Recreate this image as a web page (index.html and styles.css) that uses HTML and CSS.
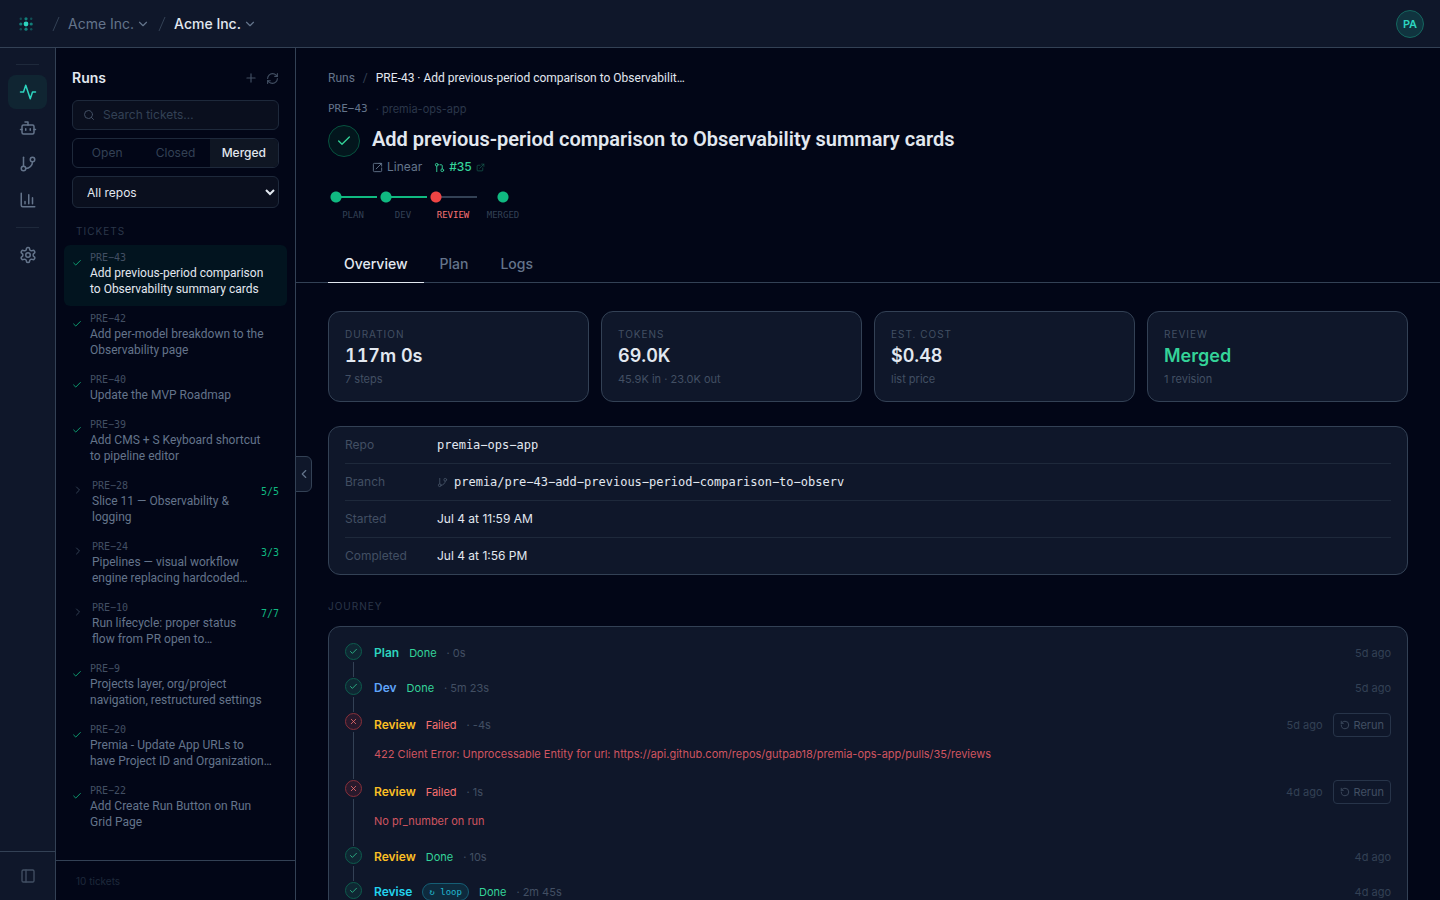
FILE: index.html
```html
<!DOCTYPE html>
<html lang="en">
<head>
<meta charset="utf-8">
<title>Runs</title>
<link rel="stylesheet" href="styles.css">
</head>
<body>
<svg width="0" height="0" class="defs" aria-hidden="true">
  <symbol id="check" viewBox="0 0 24 24"><path d="M20 6 9 17l-5-5"/></symbol>
  <symbol id="x" viewBox="0 0 24 24"><path d="M18 6 6 18M6 6l12 12"/></symbol>
  <symbol id="right" viewBox="0 0 24 24"><path d="m9 18 6-6-6-6"/></symbol>
  <symbol id="down" viewBox="0 0 24 24"><path d="m6 9 6 6 6-6"/></symbol>
  <symbol id="branch" viewBox="0 0 24 24"><path d="M6 3v12"/><circle cx="18" cy="6" r="3"/><circle cx="6" cy="18" r="3"/><path d="M18 9a9 9 0 0 1-9 9"/></symbol>
  <symbol id="rerun" viewBox="0 0 24 24"><path d="M3 12a9 9 0 1 0 9-9 9.75 9.75 0 0 0-6.74 2.74L3 8"/><path d="M3 3v5h5"/></symbol>
  <symbol id="external" viewBox="0 0 24 24"><path d="M15 3h6v6M10 14 21 3M18 13v6a2 2 0 0 1-2 2H5a2 2 0 0 1-2-2V8a2 2 0 0 1 2-2h6"/></symbol>
</svg>
<div class="app">
  <header class="topbar">
    <a href="#" class="logo" aria-label="Home">
      <svg width="16" height="16" viewBox="0 0 16 16">
        <circle cx="8" cy="8" r="2.4" fill="#2dd4bf"/>
        <g fill="#14b8a6" opacity=".65"><circle cx="8" cy="2.8" r="1.6"/><circle cx="8" cy="13.2" r="1.6"/><circle cx="2.8" cy="8" r="1.6"/><circle cx="13.2" cy="8" r="1.6"/></g>
        <g fill="#14b8a6" opacity=".35"><circle cx="2.8" cy="2.8" r="1.2"/><circle cx="13.2" cy="2.8" r="1.2"/><circle cx="2.8" cy="13.2" r="1.2"/><circle cx="13.2" cy="13.2" r="1.2"/></g>
      </svg>
    </a>
    <svg class="slash" width="8" height="16" viewBox="0 0 8 16"><path d="M7 1 1 15"/></svg>
    <button class="crumb">Acme Inc.<svg class="i" width="14" height="14"><use href="#down"/></svg></button>
    <svg class="slash" width="8" height="16" viewBox="0 0 8 16"><path d="M7 1 1 15"/></svg>
    <button class="crumb current">Acme Inc.<svg class="i" width="14" height="14"><use href="#down"/></svg></button>
    <button class="avatar">PA</button>
  </header>
  <div class="body">
    <nav class="rail">
      <div class="rail-items">
        <hr>
        <a href="#" class="active" aria-label="Runs"><svg class="i" width="18" height="18" viewBox="0 0 24 24"><path d="M22 12h-4l-3 9L9 3l-3 9H2"/></svg></a>
        <a href="#" aria-label="Agents"><svg class="i" width="18" height="18" viewBox="0 0 24 24"><path d="M12 8V4H8"/><rect width="16" height="12" x="4" y="8" rx="2"/><path d="M2 14h2M20 14h2M15 13v2M9 13v2"/></svg></a>
        <a href="#" aria-label="Pipelines"><svg class="i" width="18" height="18"><use href="#branch"/></svg></a>
        <a href="#" aria-label="Observability"><svg class="i" width="18" height="18" viewBox="0 0 24 24"><path d="M3 3v16a2 2 0 0 0 2 2h16M18 17V9M13 17V5M8 17v-3"/></svg></a>
        <hr class="second">
        <a href="#" aria-label="Settings"><svg class="i" width="18" height="18" viewBox="0 0 24 24"><path d="M12.22 2h-.44a2 2 0 0 0-2 2v.18a2 2 0 0 1-1 1.73l-.43.25a2 2 0 0 1-2 0l-.15-.08a2 2 0 0 0-2.73.73l-.22.38a2 2 0 0 0 .73 2.73l.15.1a2 2 0 0 1 1 1.72v.51a2 2 0 0 1-1 1.74l-.15.09a2 2 0 0 0-.73 2.73l.22.38a2 2 0 0 0 2.73.73l.15-.08a2 2 0 0 1 2 0l.43.25a2 2 0 0 1 1 1.73V20a2 2 0 0 0 2 2h.44a2 2 0 0 0 2-2v-.18a2 2 0 0 1 1-1.73l.43-.25a2 2 0 0 1 2 0l.15.08a2 2 0 0 0 2.73-.73l.22-.39a2 2 0 0 0-.73-2.73l-.15-.08a2 2 0 0 1-1-1.74v-.5a2 2 0 0 1 1-1.74l.15-.09a2 2 0 0 0 .73-2.73l-.22-.38a2 2 0 0 0-2.73-.73l-.15.08a2 2 0 0 1-2 0l-.43-.25a2 2 0 0 1-1-1.73V4a2 2 0 0 0-2-2z"/><circle cx="12" cy="12" r="3"/></svg></a>
      </div>
      <div class="rail-foot"><button aria-label="Toggle sidebar"><svg class="i" width="16" height="16" viewBox="0 0 24 24"><rect width="18" height="18" x="3" y="3" rx="2"/><path d="M9 3v18"/></svg></button></div>
    </nav>

    <aside class="side">
      <div class="side-head">
        <h2>Runs</h2>
        <button aria-label="New run"><svg class="i" width="14" height="14" viewBox="0 0 24 24"><path d="M5 12h14M12 5v14"/></svg></button>
        <button aria-label="Refresh"><svg class="i" width="13" height="13" viewBox="0 0 24 24"><path d="M3 12a9 9 0 0 1 9-9 9.75 9.75 0 0 1 6.74 2.74L21 8"/><path d="M21 3v5h-5M21 12a9 9 0 0 1-9 9 9.75 9.75 0 0 1-6.74-2.74L3 16"/><path d="M8 16H3v5"/></svg></button>
      </div>
      <div class="filters">
        <label class="search"><svg class="i" width="12" height="12" viewBox="0 0 24 24"><circle cx="11" cy="11" r="8"/><path d="m21 21-4.3-4.3"/></svg><input type="text" placeholder="Search tickets…" aria-label="Search tickets"></label>
        <div class="seg"><button>Open</button><button>Closed</button><button class="on">Merged</button></div>
        <select aria-label="Repository"><option>All repos</option></select>
      </div>
      <div class="tickets">
        <h3>TICKETS</h3>
        <a href="#" class="ticket sel"><svg class="i" width="10" height="10"><use href="#check"/></svg><span class="tx"><span class="id">PRE−43</span><span class="nm">Add previous-period comparison<br>to Observability summary cards</span></span></a>
        <a href="#" class="ticket"><svg class="i" width="10" height="10"><use href="#check"/></svg><span class="tx"><span class="id">PRE−42</span><span class="nm">Add per-model breakdown to the Observability page</span></span></a>
        <a href="#" class="ticket"><svg class="i" width="10" height="10"><use href="#check"/></svg><span class="tx"><span class="id">PRE−40</span><span class="nm">Update the MVP Roadmap</span></span></a>
        <a href="#" class="ticket"><svg class="i" width="10" height="10"><use href="#check"/></svg><span class="tx"><span class="id">PRE−39</span><span class="nm">Add CMS + S Keyboard shortcut<br>to pipeline editor</span></span></a>
        <a href="#" class="ticket group"><svg class="i" width="12" height="12"><use href="#right"/></svg><span class="tx"><span class="id">PRE−28</span><span class="nm">Slice 11 — Observability &amp; logging</span></span><span class="n">5/5</span></a>
        <a href="#" class="ticket group"><svg class="i" width="12" height="12"><use href="#right"/></svg><span class="tx"><span class="id">PRE−24</span><span class="nm">Pipelines — visual workflow engine replacing hardcoded…</span></span><span class="n">3/3</span></a>
        <a href="#" class="ticket group"><svg class="i" width="12" height="12"><use href="#right"/></svg><span class="tx"><span class="id">PRE−10</span><span class="nm">Run lifecycle: proper status flow from PR open to…</span></span><span class="n">7/7</span></a>
        <a href="#" class="ticket"><svg class="i" width="10" height="10"><use href="#check"/></svg><span class="tx"><span class="id">PRE−9</span><span class="nm">Projects layer, org/project navigation, restructured settings</span></span></a>
        <a href="#" class="ticket"><svg class="i" width="10" height="10"><use href="#check"/></svg><span class="tx"><span class="id">PRE−20</span><span class="nm">Premia - Update App URLs to<br>have Project ID and Organization…</span></span></a>
        <a href="#" class="ticket"><svg class="i" width="10" height="10"><use href="#check"/></svg><span class="tx"><span class="id">PRE−22</span><span class="nm">Add Create Run Button on Run<br>Grid Page</span></span></a>
      </div>
      <div class="side-foot">10 tickets</div>
      <button class="collapse" aria-label="Collapse list"><svg class="i" width="14" height="14" viewBox="0 0 24 24"><path d="m15 18-6-6 6-6"/></svg></button>
    </aside>

    <main class="main">
      <div class="head">
        <nav class="path"><a href="#">Runs</a><span class="sep">/</span><span>PRE-43 · Add previous-period comparison to Observabilit…</span></nav>
        <div class="ref"><span class="mono">PRE−43</span><span class="repo">· premia-ops-app</span></div>
        <div class="title">
          <span class="badge"><svg class="i" width="16" height="16"><use href="#check"/></svg></span>
          <div>
            <h1>Add previous-period comparison to Observability summary cards</h1>
            <div class="links">
              <a href="#"><svg class="i" width="11" height="11" viewBox="0 0 24 24"><path d="M21 13v6a2 2 0 0 1-2 2H5a2 2 0 0 1-2-2V5a2 2 0 0 1 2-2h14M15 3h6v6M9 15 21 3"/></svg>Linear</a>
              <a href="#" class="pr"><svg class="i" width="11" height="11" viewBox="0 0 24 24"><circle cx="18" cy="18" r="3"/><circle cx="6" cy="6" r="3"/><path d="M13 6h3a2 2 0 0 1 2 2v7M6 9v12"/></svg>#35<svg class="i ext" width="9" height="9"><use href="#external"/></svg></a>
            </div>
          </div>
        </div>
        <ol class="steps">
          <li class="line">PLAN</li><li class="line">DEV</li><li class="line fail">REVIEW</li><li class="end">MERGED</li>
        </ol>
      </div>
      <div class="tabs"><button class="on">Overview</button><button>Plan</button><button>Logs</button></div>
      <div class="content">
        <section class="stats">
          <div class="card"><h4>DURATION</h4><strong>117m 0s</strong><p>7 steps</p></div>
          <div class="card"><h4>TOKENS</h4><strong>69.0K</strong><p>45.9K in · 23.0K out</p></div>
          <div class="card"><h4>EST. COST</h4><strong>$0.48</strong><p>list price</p></div>
          <div class="card"><h4>REVIEW</h4><strong class="green">Merged</strong><p>1 revision</p></div>
        </section>
        <dl class="card facts">
          <div><dt>Repo</dt><dd class="mono">premia−ops−app</dd></div>
          <div><dt>Branch</dt><dd class="mono"><svg class="i" width="11" height="11"><use href="#branch"/></svg>premia/pre−43−add−previous−period−comparison−to−observ</dd></div>
          <div><dt>Started</dt><dd>Jul 4 at 11:59 AM</dd></div>
          <div><dt>Completed</dt><dd>Jul 4 at 1:56 PM</dd></div>
        </dl>
        <h3 class="journey-title">JOURNEY</h3>
        <ol class="card journey">
          <li class="done"><span class="dot"><svg class="i" width="9" height="9"><use href="#check"/></svg></span><div class="ev"><div class="row"><b class="teal">Plan</b><em>Done</em><small>· 0s</small><time>5d ago</time></div></div></li>
          <li class="done"><span class="dot"><svg class="i" width="9" height="9"><use href="#check"/></svg></span><div class="ev"><div class="row"><b class="blue">Dev</b><em>Done</em><small>· 5m 23s</small><time>5d ago</time></div></div></li>
          <li class="failed"><span class="dot"><svg class="i" width="9" height="9"><use href="#x"/></svg></span><div class="ev"><div class="row"><b class="amber">Review</b><em>Failed</em><small>· -4s</small><time>5d ago</time><button><svg class="i" width="10" height="10"><use href="#rerun"/></svg>Rerun</button></div><p>422 Client Error: Unprocessable Entity for url: https://api.github.com/repos/gutpab18/premia-ops-app/pulls/35/reviews</p></div></li>
          <li class="failed"><span class="dot"><svg class="i" width="9" height="9"><use href="#x"/></svg></span><div class="ev"><div class="row"><b class="amber">Review</b><em>Failed</em><small>· 1s</small><time>4d ago</time><button><svg class="i" width="10" height="10"><use href="#rerun"/></svg>Rerun</button></div><p>No pr_number on run</p></div></li>
          <li class="done"><span class="dot"><svg class="i" width="9" height="9"><use href="#check"/></svg></span><div class="ev"><div class="row"><b class="amber">Review</b><em>Done</em><small>· 10s</small><time>4d ago</time></div></div></li>
          <li class="done"><span class="dot"><svg class="i" width="9" height="9"><use href="#check"/></svg></span><div class="ev"><div class="row"><b class="cyan">Revise</b><span class="loop">↻ loop</span><em>Done</em><small>· 2m 45s</small><time>4d ago</time></div></div></li>
        </ol>
      </div>
    </main>
  </div>
</div>
</body>
</html>
```
FILE: styles.css
```css
:root {
  --bg: #020617;
  --panel: #0f172a;
  --line: #334155;
  --line-soft: #1e293b;
  --text: #e2e8f0;
  --muted: #64748b;
  --dim: #424f63;
  --faint: #334155;
  --label: #2b374a;
  --sans: Inter, "Liberation Sans", sans-serif;
  --copy: Roboto, "Liberation Sans", sans-serif;
  --mono: "DejaVu Sans Mono", monospace;
}
* { box-sizing: border-box; }
body, h1, h2, h3, h4, p, ol, dl, dd, hr { margin: 0; padding: 0; }
body { background: var(--bg); color: var(--text); font: 12px/16px var(--sans); }
ol { list-style: none; }
a { color: inherit; text-decoration: none; }
button { background: none; border: 0; padding: 0; margin: 0; color: inherit; font: inherit; cursor: pointer; }
.defs { position: absolute; }
.i { flex: none; display: block; fill: none; stroke: currentColor; stroke-width: 2; stroke-linecap: round; stroke-linejoin: round; }
.mono { font-family: var(--mono); }

.app { display: flex; flex-direction: column; height: 100vh; overflow: hidden; }
.topbar { flex: none; height: 48px; display: flex; align-items: center; padding: 0 16px; background: var(--panel); border-bottom: 1px solid var(--line); }
.logo { width: 20px; display: flex; justify-content: center; margin-right: 16px; }
.slash { fill: none; stroke: var(--line); }
.crumb { display: flex; align-items: center; gap: 2px; margin: 0 8px; font-size: 14px; line-height: 20px; color: var(--muted); }
.crumb.current { color: var(--text); font-weight: 500; }
.crumb .i { color: var(--muted); }
.avatar { margin-left: auto; width: 28px; height: 28px; border-radius: 50%; border: 1px solid #14665f; background: #10343f; color: #2dd4bf; font-size: 11px; font-weight: 600; }

.body { flex: 1; min-height: 0; display: flex; }
.rail { flex: none; width: 56px; display: flex; flex-direction: column; background: var(--panel); border-right: 1px solid var(--line); color: var(--muted); }
.rail-items { flex: 1; display: flex; flex-direction: column; gap: 2px; padding: 16px 8px 0; }
.rail hr { width: 23px; height: 1px; border: 0; background: var(--line-soft); margin: 0 8px 8px; }
.rail hr.second { margin: 8px; }
.rail a { height: 34px; display: flex; align-items: center; justify-content: center; border-radius: 8px; }
.rail a.active { background: #102532; color: #2dd4bf; }
.rail-foot { height: 49px; display: flex; align-items: center; justify-content: center; border-top: 1px solid var(--line); color: var(--dim); }

.side { position: relative; flex: none; width: 240px; display: flex; flex-direction: column; border-right: 1px solid var(--line); }
.side-head { display: flex; align-items: center; gap: 8px; padding: 20px 16px 12px; color: var(--dim); }
.side-head h2 { margin-right: auto; color: var(--text); font-size: 14px; line-height: 20px; font-weight: 600; }
.filters { display: flex; flex-direction: column; gap: 8px; padding: 0 16px; }
.search { display: flex; align-items: center; gap: 8px; height: 30px; padding: 0 10px; border: 1px solid var(--line-soft); border-radius: 6px; background: #0a0f1e; color: var(--dim); }
.search input { flex: 1; min-width: 0; background: none; border: 0; padding: 0; outline: 0; color: var(--text); font: inherit; }
.search input::placeholder { color: var(--faint); }
.seg { display: grid; grid-template-columns: repeat(3, 1fr); height: 30px; border: 1px solid var(--line-soft); border-radius: 6px; overflow: hidden; color: var(--faint); }
.seg .on { background: #0f1623; color: var(--text); font-weight: 500; }
.side select { height: 32px; padding: 0 10px; border: 1px solid var(--line-soft); border-radius: 6px; background: #0a0f1e; color: var(--text); font: inherit; }
.tickets { flex: 1; min-height: 0; overflow: hidden; padding: 15px 8px 0; }
.tickets h3, .journey-title, .card h4 { font-size: 10px; line-height: 16px; font-weight: 400; letter-spacing: 1px; color: var(--label); }
.tickets h3 { padding: 0 12px 6px; }
.ticket { display: flex; gap: 8px; padding: 6px 8px; border-radius: 6px; color: var(--muted); }
.ticket > .i { margin-top: 7px; color: #10b981; }
.tx { flex: 1; min-width: 0; }
.id { display: block; font: 10px/14px var(--mono); color: var(--dim); }
.nm { display: block; font-family: var(--copy); line-height: 16px; padding-bottom: 3px; }
.ticket.sel { background: #02141f; }
.sel .nm { color: var(--text); }
.ticket.group > .i { margin-top: 5px; color: var(--faint); }
.n { font: 10px/13px var(--mono); color: #10b981; margin-top: 6px; }
.side-foot { height: 40px; padding: 12px 20px; border-top: 1px solid var(--line); font-size: 10px; line-height: 16px; color: var(--line-soft); }
.collapse { position: absolute; left: 100%; top: 408px; width: 17px; height: 36px; display: flex; align-items: center; justify-content: center; border: 1px solid var(--line); border-radius: 0 6px 6px 0; background: var(--panel); color: var(--muted); }

.main { flex: 1; min-width: 0; overflow: hidden; }
.head { padding: 20px 32px 0; }
.path { display: flex; gap: 8px; font-family: var(--copy); line-height: 20px; }
.path a { color: var(--muted); }
.path .sep { color: var(--faint); }
.ref { display: flex; gap: 8px; align-items: center; margin-top: 12px; line-height: 18px; font-size: 11px; color: var(--muted); }
.ref .repo { color: var(--label); }
.title { display: flex; gap: 12px; margin-top: 7px; }
.badge { flex: none; display: flex; align-items: center; justify-content: center; width: 32px; height: 32px; border: 1px solid #07523f; border-radius: 50%; background: #03161d; color: #34d399; }
.title h1 { font-family: var(--copy); font-size: 20px; line-height: 28px; font-weight: 600; }
.links { display: flex; gap: 12px; margin-top: 6px; color: var(--muted); }
.links a { display: flex; align-items: center; gap: 4px; }
.links .pr { color: #34d399; font-weight: 500; }
.links .ext { opacity: .4; }
.steps { display: grid; grid-template-columns: 50px 50px 50px 50px; margin-top: 16px; font: 9px/12px var(--mono); color: var(--faint); text-align: center; }
.steps li::before { content: ""; display: block; height: 12px; margin-bottom: 6px; background: radial-gradient(circle at 8px 6px, #10b981 5px, transparent 6px), linear-gradient(#10b981, #10b981) 8px 5px / 41px 2px no-repeat; }
.steps .fail { color: #f87171; }
.steps .fail::before { background: radial-gradient(circle at 8px 6px, #ef4444 5px, transparent 6px), linear-gradient(#334155, #334155) 8px 5px / 41px 2px no-repeat; }
.steps .end::before { background: radial-gradient(circle at 25px 6px, #10b981 5px, transparent 6px); }
.tabs { display: flex; margin-top: 25px; padding: 0 32px; border-bottom: 1px solid var(--line); }
.tabs button { height: 37px; padding: 0 16px 1px; margin-bottom: -1px; border-bottom: 1px solid transparent; font-size: 14px; font-weight: 500; color: var(--muted); }
.tabs .on { color: var(--text); border-color: var(--text); }

.content { padding: 28px 32px; }
.card { background: var(--panel); border: 1px solid var(--line); border-radius: 12px; }
.stats { display: grid; grid-template-columns: repeat(4, 1fr); gap: 12px; }
.stats .card { padding: 14px 16px; }
.card h4 { color: var(--dim); }
.stats strong { display: block; margin: 2px 0 3px; font-size: 18px; line-height: 24px; font-weight: 600; font-variant-numeric: tabular-nums; }
.stats p { font-size: 11px; line-height: 16px; color: var(--dim); }
.green { color: #34d399; }
.facts { margin-top: 24px; padding: 0 16px; }
.facts div { display: flex; align-items: center; height: 37px; border-bottom: 1px solid var(--line-soft); }
.facts div:last-child { height: 36px; border: 0; }
.facts dt { width: 92px; color: var(--dim); }
.facts dd { display: flex; align-items: center; gap: 6px; }
.facts .i { color: var(--dim); }
.journey-title { margin: 23px 0 12px; }
.journey { padding: 16px; }
.journey li { position: relative; display: flex; gap: 12px; }
.dot { flex: none; width: 17px; height: 17px; display: flex; align-items: center; justify-content: center; border: 1px solid #0d5c4d; border-radius: 50%; background: #0f2733; color: #34d399; }
.failed .dot { border-color: #87303a; background: #28192c; color: #f87171; }
.journey li::after { content: ""; position: absolute; left: 8px; top: 19px; bottom: 1px; width: 1px; background: var(--line); }
.journey li:last-child::after { display: none; }
.ev { flex: 1; padding-bottom: 15px; }
.row { display: flex; align-items: center; gap: 10px; min-height: 20px; font-size: 11px; }
.row b { font-size: 12px; font-weight: 600; }
.row em { font-style: normal; color: #34d399; }
.failed em { color: #f87171; }
.row small { font-size: 11px; color: var(--dim); }
.row time { margin-left: auto; color: var(--faint); }
.row button { display: flex; align-items: center; gap: 4px; height: 24px; padding: 0 6px; border: 1px solid #273449; border-radius: 4px; color: var(--dim); }
.ev p { margin-top: 9px; padding-bottom: 3px; font-size: 11px; color: #cf5560; }
.loop { display: flex; align-items: center; height: 18px; padding: 0 6px; border: 1px solid #155e75; border-radius: 9px; background: #0e2a3d; color: #22b8d0; font: 9px/12px var(--mono); }
.teal { color: #2dd4bf; }
.blue { color: #60a5fa; }
.amber { color: #fbbf24; }
.cyan { color: #22d3ee; }
```
